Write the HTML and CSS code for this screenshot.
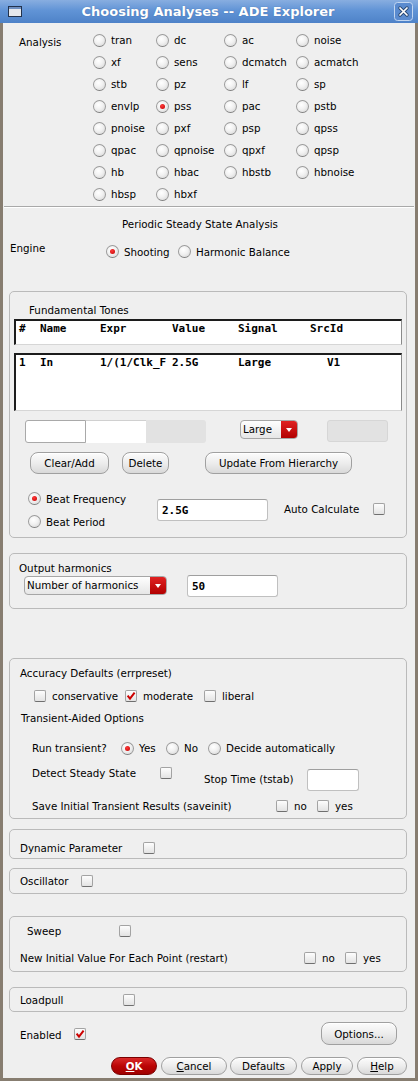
FILE: index.html
```html
<!DOCTYPE html>
<html>
<head>
<meta charset="utf-8">
<title>Choosing Analyses -- ADE Explorer</title>
<link rel="stylesheet" href="styles.css">
</head>
<body>
<div class="win">
  <div class="titlebar">
    <svg class="winicon" width="14" height="11" viewBox="0 0 14 11"><rect x="0.5" y="0.5" width="13" height="10" fill="#e4e7ec" stroke="#22324c"/><rect x="1" y="1" width="12" height="2" fill="#6f8fbf"/></svg>
    <div class="title">Choosing Analyses -- ADE Explorer</div>
    <svg class="closebtn" width="19" height="19" viewBox="0 0 19 19"><rect x="0.5" y="0.5" width="18" height="18" rx="3" fill="#5a8bcf" stroke="#c2d6f0"/><path d="M6 6 L13 13 M13 6 L6 13" stroke="#27466f" stroke-width="3.4" stroke-linecap="round"/><path d="M6 6 L13 13 M13 6 L6 13" stroke="#ffffff" stroke-width="1.7" stroke-linecap="round"/></svg>
  </div>
  <div class="frame">
    <div class="analysis">
      <div class="alabel">Analysis</div>
      <div class="agrid">
        <label class="opt"><span class="radio"></span>tran</label>
        <label class="opt"><span class="radio"></span>dc</label>
        <label class="opt"><span class="radio"></span>ac</label>
        <label class="opt"><span class="radio"></span>noise</label>
        <label class="opt"><span class="radio"></span>xf</label>
        <label class="opt"><span class="radio"></span>sens</label>
        <label class="opt"><span class="radio"></span>dcmatch</label>
        <label class="opt"><span class="radio"></span>acmatch</label>
        <label class="opt"><span class="radio"></span>stb</label>
        <label class="opt"><span class="radio"></span>pz</label>
        <label class="opt"><span class="radio"></span>lf</label>
        <label class="opt"><span class="radio"></span>sp</label>
        <label class="opt"><span class="radio"></span>envlp</label>
        <label class="opt"><span class="radio on"></span>pss</label>
        <label class="opt"><span class="radio"></span>pac</label>
        <label class="opt"><span class="radio"></span>pstb</label>
        <label class="opt"><span class="radio"></span>pnoise</label>
        <label class="opt"><span class="radio"></span>pxf</label>
        <label class="opt"><span class="radio"></span>psp</label>
        <label class="opt"><span class="radio"></span>qpss</label>
        <label class="opt"><span class="radio"></span>qpac</label>
        <label class="opt"><span class="radio"></span>qpnoise</label>
        <label class="opt"><span class="radio"></span>qpxf</label>
        <label class="opt"><span class="radio"></span>qpsp</label>
        <label class="opt"><span class="radio"></span>hb</label>
        <label class="opt"><span class="radio"></span>hbac</label>
        <label class="opt"><span class="radio"></span>hbstb</label>
        <label class="opt"><span class="radio"></span>hbnoise</label>
        <label class="opt"><span class="radio"></span>hbsp</label>
        <label class="opt"><span class="radio"></span>hbxf</label>
      </div>
    </div>
    <div class="sep"></div>
    <div class="pss-title">Periodic Steady State Analysis</div>
    <div class="engine">
      <div class="elabel">Engine</div>
      <div class="eopts">
        <label class="opt w72"><span class="radio on"></span>Shooting</label>
        <label class="opt"><span class="radio"></span>Harmonic Balance</label>
      </div>
    </div>

    <div class="box tones">
      <div class="tlabel">Fundamental Tones</div>
      <div class="list head">
        <div class="lrow"><span>#</span><span>Name</span><span>Expr</span><span>Value</span><span>Signal</span><span>SrcId</span></div>
      </div>
      <div class="list rows">
        <div class="lrow"><span>1</span><span>In</span><span>1/(1/Clk_F</span><span>2.5G</span><span>Large</span><span class="src">V1</span></div>
      </div>
      <div class="fields">
        <div class="f1"></div>
        <div class="f2"></div>
        <div class="f3"></div>
        <div class="dd ddl"><span class="dtext">Large</span><span class="darrow"></span></div>
        <div class="f4"></div>
      </div>
      <div class="btns">
        <div class="btn b-clear">Clear/Add</div>
        <div class="btn b-del">Delete</div>
        <div class="btn b-upd">Update From Hierarchy</div>
      </div>
      <div class="beat">
        <div class="beatcol">
          <label class="opt brow"><span class="radio on"></span>Beat Frequency</label>
          <label class="opt brow"><span class="radio"></span>Beat Period</label>
        </div>
        <div class="tf beatf">2.5G</div>
        <div class="autoc"><span class="autol">Auto Calculate</span><span class="cb"></span></div>
      </div>
    </div>

    <div class="box harm">
      <div class="hlabel">Output harmonics</div>
      <div class="hrow">
        <div class="dd ddh"><span class="dtext">Number of harmonics</span><span class="darrow"></span></div>
        <div class="tf hf">50</div>
      </div>
    </div>

    <div class="box acc">
      <div class="ar r1">Accuracy Defaults (errpreset)</div>
      <div class="ar r2">
        <span class="ck w91"><span class="cb"></span>conservative</span>
        <span class="ck w79"><span class="cb on"><svg viewBox="0 0 10 10" width="10" height="10"><path d="M1.6 4.6 L4 7.6 L8.6 1.6" fill="none" stroke="#cc0000" stroke-width="2"/></svg></span>moderate</span>
        <span class="ck"><span class="cb"></span>liberal</span>
      </div>
      <div class="ar r3">Transient-Aided Options</div>
      <div class="ar r4">
        <span class="rtl">Run transient?</span>
        <span class="opt w45"><span class="radio on"></span>Yes</span>
        <span class="opt w42"><span class="radio"></span>No</span>
        <span class="opt"><span class="radio"></span>Decide automatically</span>
      </div>
      <div class="ar r5">
        <span class="dsl">Detect Steady State</span>
        <span class="cb dscb"></span>
        <span class="stl">Stop Time (tstab)</span>
        <span class="tf stf"></span>
      </div>
      <div class="ar r6">
        <span class="svl">Save Initial Transient Results (saveinit)</span>
        <span class="ck w41"><span class="cb"></span>no</span>
        <span class="ck"><span class="cb"></span>yes</span>
      </div>
    </div>

    <div class="box dyn">
      <div class="ar dynrow"><span class="dynl">Dynamic Parameter</span><span class="cb"></span></div>
    </div>

    <div class="box osc">
      <div class="ar oscrow"><span class="oscl">Oscillator</span><span class="cb"></span></div>
    </div>

    <div class="box sweep">
      <div class="ar sw1"><span class="swl">Sweep</span><span class="cb"></span></div>
      <div class="ar sw2">
        <span class="nil">New Initial Value For Each Point (restart)</span>
        <span class="ck w41"><span class="cb"></span>no</span>
        <span class="ck"><span class="cb"></span>yes</span>
      </div>
    </div>

    <div class="box load">
      <div class="ar loadrow"><span class="loadl">Loadpull</span><span class="cb"></span></div>
    </div>

    <div class="enrow">
      <span class="enl">Enabled</span>
      <span class="cb on"><svg viewBox="0 0 10 10" width="10" height="10"><path d="M1.6 4.6 L4 7.6 L8.6 1.6" fill="none" stroke="#cc0000" stroke-width="2"/></svg></span>
      <div class="btn opts">Options...</div>
    </div>

    <div class="bottom">
      <div class="btn bb ok"><u>O</u>K</div>
      <div class="btn bb cancel"><u>C</u>ancel</div>
      <div class="btn bb defaults">Defaults</div>
      <div class="btn bb apply">Apply</div>
      <div class="btn bb help"><u>H</u>elp</div>
    </div>
  </div>
</div>
</body>
</html>
```
FILE: styles.css
```css
* { box-sizing: border-box; }
html, body { margin: 0; padding: 0; }
body {
  font-family: "DejaVu Sans", "Liberation Sans", sans-serif;
  font-size: 10.3px;
  line-height: 14px;
  color: #000;
  background: #efefef;
}
.win { width: 418px; height: 1081px; display: flex; flex-direction: column; }

/* title bar */
.titlebar {
  height: 23px; flex: none;
  display: flex; align-items: center;
  padding: 0 5px 0 8px;
  background: linear-gradient(#88aee0, #6194d6 45%, #4e82c8);
}
.winicon { flex: none; }
.title {
  flex: 1; text-align: center;
  color: #fff; font-weight: bold; font-size: 13px; line-height: 23px;
  text-shadow: 0 0 1px rgba(30,60,110,0.5);
}
.closebtn { flex: none; }

.frame {
  flex: 1;
  border: 3px solid #877d70; border-top: 0;
  background: #efefef;
  display: flex; flex-direction: column;
}

/* radio / checkbox */
.opt { display: flex; align-items: center; gap: 5px; white-space: nowrap; }
.radio {
  position: relative; flex: none;
  width: 13px; height: 13px; border-radius: 50%;
  border: 1px solid #9b9b9b; border-bottom-color: #7f7f7f;
  background: radial-gradient(circle at 40% 35%, #ffffff 0%, #f1f1f1 45%, #d2d2d2 100%);
}
.radio.on::after {
  content: ""; position: absolute; left: 3px; top: 3px;
  width: 5px; height: 5px; border-radius: 50%;
  background: radial-gradient(circle at 40% 35%, #ff3a3a, #c00000);
}
.cb {
  position: relative; flex: none;
  width: 12px; height: 12px; border-radius: 2px;
  border: 1px solid #a3a3a3; border-bottom-color: #6f6f6f;
  background: linear-gradient(#fdfdfd, #e3e3e3);
}
.cb svg { position: absolute; left: 0; top: 0; }
.ck { display: flex; align-items: center; gap: 6px; white-space: nowrap; }

/* analysis grid */
.analysis { display: flex; padding-top: 6px; }
.alabel { width: 90px; padding-left: 16px; padding-top: 2px; line-height: 22px; }
.agrid { display: grid; grid-template-columns: 63px 68px 72px 1fr; grid-auto-rows: 22px; }

.sep { margin: 1px 1px 0 1px; height: 2px; border-top: 1px solid #a9a9a9; border-bottom: 1px solid #ffffff; }

.pss-title { margin-top: 9px; text-align: center; padding-right: 18px; }

.engine { display: flex; margin-top: 10px; height: 18px; }
.elabel { width: 103px; padding-left: 7px; }
.eopts { display: flex; margin-top: 3px; }
.w72 { width: 72px; }

/* boxes */
.box { margin: 0 8px 0 6px; border: 1px solid #bababa; border-radius: 5px; }

.tones { margin-top: 32px; }
.tlabel { padding: 11px 0 0 19px; }
.list {
  margin: 0 4px;
  background: #fff;
  border-top: 2px solid #1c1c1c; border-left: 2px solid #1c1c1c;
  border-right: 1px solid #8a8a8a; border-bottom: 1px solid #d6d6d6;
  font: bold 11px "DejaVu Sans Mono", "Liberation Mono", monospace;
}
.list.head { margin-top: 2px; height: 26px; }
.list.rows { margin-top: 8px; height: 58px; }
.lrow {
  display: grid; grid-template-columns: 21px 60px 72px 66px 72px 1fr;
  padding: 1px 0 0 3px; line-height: 14px; white-space: pre;
}
.src { padding-left: 17px; }

.fields { display: flex; margin-top: 9px; height: 23px; padding-left: 15px; }
.f1 { width: 61px; height: 23px; background: #fff; border: 1px solid #a9a9a9; border-radius: 3px 0 0 3px; }
.f2 { width: 60px; height: 23px; background: #fff; border-top: 1px solid #d0d0d0; }
.f3 { width: 60px; height: 23px; background: #e2e2e2; border-radius: 0 3px 3px 0; }
.f4 { width: 61px; height: 22px; margin-left: 29px; background: #e2e2e2; border: 1px solid #d6d6d6; border-radius: 3px; }

.dd {
  display: flex; height: 19px;
  border: 1px solid #a6a6a6; border-radius: 4px; overflow: hidden;
  background: linear-gradient(#fefefe, #e6e6e6);
}
.dtext { flex: 1; padding-left: 2px; line-height: 17px; white-space: nowrap; }
.darrow {
  width: 16px; flex: none;
  background: linear-gradient(#e02222, #b20000);
  display: flex; align-items: center; justify-content: center;
}
.darrow::after {
  content: ""; width: 0; height: 0;
  border-left: 3.5px solid transparent; border-right: 3.5px solid transparent;
  border-top: 4px solid #fff;
}
.ddl { width: 58px; margin-left: 34px; }

.btn {
  height: 22px;
  border: 1px solid #a0a0a0; border-radius: 8px;
  background: linear-gradient(#fcfcfc, #ededed 50%, #d9d9d9);
  box-shadow: inset 0 1px 0 #fff;
  display: flex; align-items: center; justify-content: center;
  white-space: nowrap;
}
.btns { display: flex; margin-top: 9px; padding-left: 20px; }
.b-clear { width: 79px; }
.b-del { width: 47px; margin-left: 13px; }
.b-upd { width: 147px; margin-left: 36px; }

.beat { display: flex; margin-top: 13px; padding-bottom: 4px; }
.beatcol { margin-left: 18px; width: 129px; }
.brow { height: 23px; }
.tf {
  background: #fff;
  border: 1px solid #c0c0c0; border-top-color: #9f9f9f; border-radius: 3px;
  font: bold 11px "DejaVu Sans Mono", "Liberation Mono", monospace;
  padding-left: 4px;
  display: flex; align-items: center;
}
.beatf { margin-top: 12px; width: 111px; height: 22px; }
.autoc { display: flex; align-items: center; margin-left: 16px; margin-top: 15px; height: 14px; }
.autol { width: 89px; }

.harm { margin-top: 15px; padding-bottom: 11px; }
.hlabel { padding: 7px 0 0 9px; }
.hrow { display: flex; height: 22px; }
.ddh { width: 143px; margin-left: 14px; margin-top: 1px; height: 19px; }
.hf { width: 91px; height: 22px; margin-left: 20px; }

.acc { margin-top: 49px; padding-bottom: 1px; }
.ar { display: flex; align-items: center; white-space: nowrap; }
.r1 { height: 28px; padding-left: 10px; }
.r2 { height: 18px; padding-left: 24px; }
.w91 { width: 91px; }
.w79 { width: 79px; }
.w45 { width: 45px; }
.w42 { width: 42px; }
.w41 { width: 41px; }
.r3 { height: 26px; padding-left: 11px; }
.r4 { height: 34px; padding-left: 22px; }
.rtl { width: 89px; }
.r5 { height: 30px; padding-left: 22px; align-items: flex-start; }
.dsl { width: 128px; margin-top: 1px; }
.dscb { margin-top: 2px; }
.stl { width: 103px; margin-left: 32px; margin-top: 7px; }
.stf { width: 52px; height: 22px; margin-top: 4px; }
.r6 { height: 22px; padding-left: 22px; }
.svl { width: 244px; }

.dyn { margin-top: 10px; padding: 11px 0 3px 10px; }
.dynrow { height: 14px; }
.dynl { width: 123px; }

.osc { margin-top: 9px; padding-left: 10px; }
.oscrow { height: 24px; }
.oscl { width: 61px; }

.sweep { margin-top: 22px; }
.sw1 { height: 28px; padding-left: 17px; }
.swl { width: 92px; }
.sw2 { height: 26px; padding-left: 10px; }
.nil { width: 284px; }

.load { margin-top: 15px; padding-left: 10px; }
.loadrow { height: 23px; }
.loadl { width: 103px; }

.enrow { display: flex; align-items: center; margin-top: 10px; height: 23px; padding: 0 18px 0 17px; }
.enl { width: 54px; padding-top: 2px; }
.opts { margin-left: auto; width: 76px; height: 23px; }

.bottom { display: flex; justify-content: flex-end; margin-top: 12px; padding-right: 8px; }
.bb { height: 18px; border-radius: 9px; }
.ok {
  width: 46px;
  background: linear-gradient(#d92a2a, #bb0505 50%, #a00000);
  border-color: #7a0000; box-shadow: none;
  color: #fff; font-weight: bold;
}
.cancel { width: 66px; margin-left: 4px; }
.defaults { width: 67px; margin-left: 3px; }
.apply { width: 52px; margin-left: 4px; }
.help { width: 50px; margin-left: 4px; }
```
